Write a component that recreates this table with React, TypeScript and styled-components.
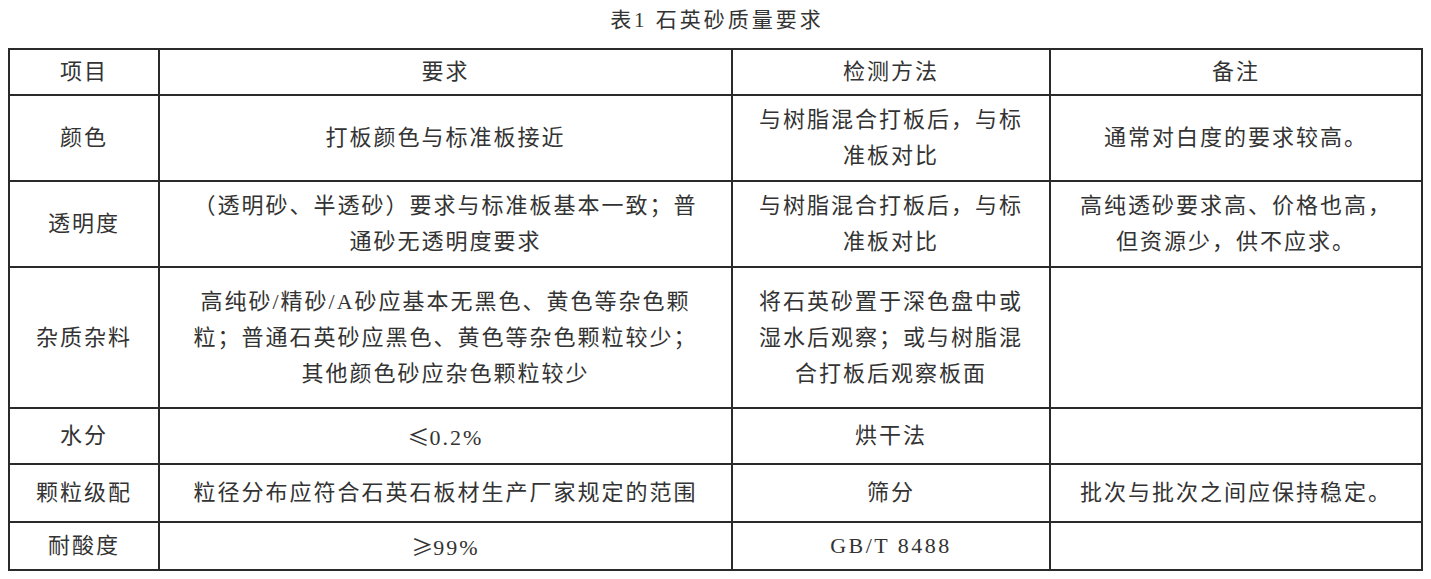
import React from "react";
import styled, { createGlobalStyle } from "styled-components";

const GlobalStyle = createGlobalStyle`
  html, body {
    margin: 0;
    padding: 0;
    background: #ffffff;
  }
  body {
    margin: 8px;
    font-family: "Liberation Serif", "Noto Sans CJK SC", serif;
    color: #333333;
  }
`;

const Page = styled.div`
  display: flex;
  flex-direction: column;
  align-items: stretch;
`;

const Title = styled.div`
  height: 24px;
  line-height: 24px;
  margin-bottom: 16px;
  text-align: center;
  font-size: 21px;
  font-weight: 400;
  letter-spacing: 3px;
  padding-left: 3px;
  color: #333333;
`;

const Table = styled.table`
  width: 100%;
  table-layout: fixed;
  border-collapse: separate;
  border-spacing: 0;
  border-top: 2px solid #2a2a2a;
  border-left: 2px solid #2a2a2a;
`;

const Col = styled.col<{ $w: number }>`
  width: ${(p) => p.$w}px;
`;

const Row = styled.tr<{ $h: number }>`
  height: ${(p) => p.$h}px;
`;

const Cell = styled.td<{ $ls?: number }>`
  box-sizing: border-box;
  border-right: 2px solid #2a2a2a;
  border-bottom: 2px solid #2a2a2a;
  padding: 0 4px;
  text-align: center;
  vertical-align: middle;
  font-size: 22px;
  font-weight: 400;
  line-height: 36px;
  letter-spacing: ${(p) => (p.$ls ?? 2)}px;
  color: #333333;
  white-space: nowrap;
`;

const HeadCell = styled(Cell).attrs({ as: "th" })``;

const Line = styled.span`
  display: block;
`;

const MathSign = styled.span`
  font-family: "Noto Sans CJK SC", sans-serif;
  letter-spacing: 0;
`;

type Content = string[] | string;
type RowData = { h: number; cells: Content[] };

const rows: RowData[] = [
  {
    h: 86,
    cells: [
      "颜色",
      "打板颜色与标准板接近",
      ["与树脂混合打板后，与标", "准板对比"],
      "通常对白度的要求较高。",
    ],
  },
  {
    h: 86,
    cells: [
      "透明度",
      ["（透明砂、半透砂）要求与标准板基本一致；普", "通砂无透明度要求"],
      ["与树脂混合打板后，与标", "准板对比"],
      ["高纯透砂要求高、价格也高，", "但资源少，供不应求。"],
    ],
  },
  {
    h: 141,
    cells: [
      "杂质杂料",
      [
        "高纯砂/精砂/A砂应基本无黑色、黄色等杂色颗",
        "粒；普通石英砂应黑色、黄色等杂色颗粒较少；",
        "其他颜色砂应杂色颗粒较少",
      ],
      ["将石英砂置于深色盘中或", "湿水后观察；或与树脂混", "合打板后观察板面"],
      "",
    ],
  },
  { h: 56, cells: ["水分", "≤0.2%", "烘干法", ""] },
  {
    h: 58,
    cells: ["颗粒级配", "粒径分布应符合石英石板材生产厂家规定的范围", "筛分", "批次与批次之间应保持稳定。"],
  },
  { h: 48, cells: ["耐酸度", "≥99%", "GB/T 8488", ""] },
];

const renderText = (s: string) => {
  const first = s.charAt(0);
  if (first === "≤" || first === "≥") {
    return (
      <>
        <MathSign>{first}</MathSign>
        {s.slice(1)}
      </>
    );
  }
  return s;
};

const renderContent = (c: Content) =>
  Array.isArray(c) ? c.map((l, i) => <Line key={i}>{l}</Line>) : renderText(c);

export default function App() {
  return (
    <Page>
      <GlobalStyle />
      <Title>表1 石英砂质量要求</Title>
      <Table>
        <colgroup>
          <Col $w={150} />
          <Col $w={573} />
          <Col $w={318} />
          <Col $w={372} />
        </colgroup>
        <thead>
          <Row $h={46}>
            <HeadCell>项目</HeadCell>
            <HeadCell>要求</HeadCell>
            <HeadCell>检测方法</HeadCell>
            <HeadCell>备注</HeadCell>
          </Row>
        </thead>
        <tbody>
          {rows.map((r, i) => (
            <Row key={i} $h={r.h}>
              {r.cells.map((c, j) => (
                <Cell key={j} $ls={c === "GB/T 8488" ? 2.5 : 2}>
                  {renderContent(c)}
                </Cell>
              ))}
            </Row>
          ))}
        </tbody>
      </Table>
    </Page>
  );
}
